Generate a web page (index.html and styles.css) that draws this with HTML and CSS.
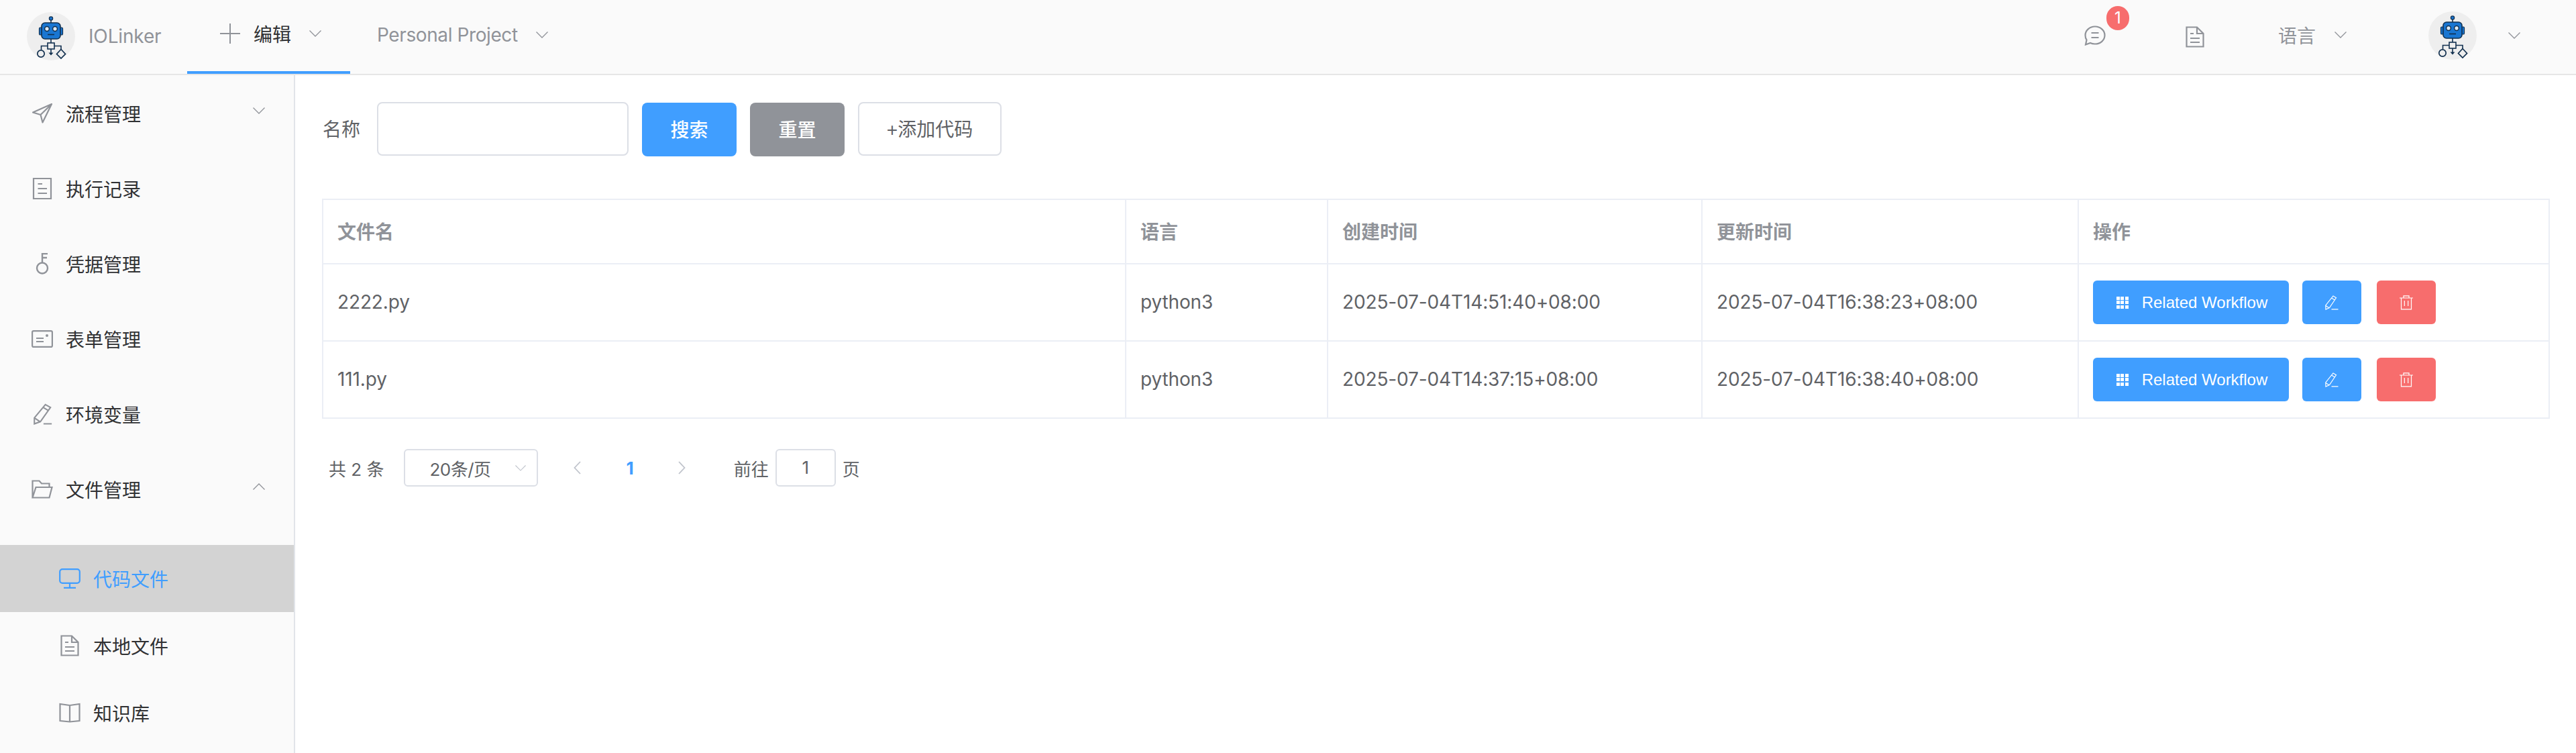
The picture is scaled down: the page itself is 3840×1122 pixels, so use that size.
FILE: index.html
```html
<!DOCTYPE html>
<html lang="zh">
<head>
<meta charset="utf-8">
<title>IOLinker</title>
<link rel="stylesheet" href="styles.css">
</head>
<body>
<svg class="defs" width="0" height="0" aria-hidden="true">
  <defs>
    <symbol id="robot" viewBox="0 0 72 72">
      <circle cx="36" cy="9.5" r="2.6" fill="#1976d2" stroke="#12304f" stroke-width="1.3"/>
      <path d="M36 12v4" stroke="#12304f" stroke-width="1.6" fill="none"/>
      <rect x="18.5" y="23" width="4" height="11" rx="1.6" fill="#1976d2" stroke="#12304f" stroke-width="1.2"/>
      <rect x="49.5" y="23" width="4" height="11" rx="1.6" fill="#1976d2" stroke="#12304f" stroke-width="1.2"/>
      <rect x="22" y="16" width="28" height="24" rx="5" fill="#1976d2" stroke="#12304f" stroke-width="1.6"/>
      <circle cx="30" cy="25" r="3.4" fill="#dbe9f5" stroke="#12304f" stroke-width="1.5"/>
      <circle cx="42" cy="25" r="3.4" fill="#dbe9f5" stroke="#12304f" stroke-width="1.5"/>
      <path d="M31 33.500h10" stroke="#12304f" stroke-width="1.6"/>
      <path d="M36 40v6M31 50.500H21.500V56M41 50.500H51V55M36 54.500V63" stroke="#12304f" stroke-width="1.6" fill="none"/>
      <rect x="31" y="46" width="10" height="9" fill="#eee" stroke="#12304f" stroke-width="1.6"/>
      <path d="M32.500 60.500L36 64.500L39.500 60.500Z" fill="#12304f"/>
      <circle cx="21" cy="62" r="5.200" fill="none" stroke="#12304f" stroke-width="1.7"/>
      <path d="M51 55.500L57.500 62.500L51 69L44.500 62.500Z" fill="none" stroke="#12304f" stroke-width="1.7"/>
    </symbol>
    <symbol id="chev" viewBox="0 0 18 10"><path d="M.5.500L9 9L17.500.500" fill="none" stroke="currentColor" stroke-width="1.300"/></symbol>
    <symbol id="doc" viewBox="0 0 28 32"><path d="M1.500 1.500H17L26.500 11V30.500H1.500ZM17 1.500V11H26.500M7 11H12M7 18H21M7 24H21" fill="none" stroke="currentColor" stroke-width="2.200"/></symbol>
    <symbol id="pencil" viewBox="0 0 20 22"><path d="M12 1L16.500 3.800L6.500 18.500L1 21L.8 15ZM9.800 4.200L14.500 7M1 15.500L5.500 18.500M9.500 20.800H19.500" fill="none" stroke="#fff" stroke-width="1.200"/></symbol>
    <symbol id="trash" viewBox="0 0 20 22"><path d="M0 4H20M6 4V.8H14V4M2.500 4V20.800H17.500V4M7.300 8V16M12.700 8V16" fill="none" stroke="#fff" stroke-width="1.200"/></symbol>
  </defs>
</svg>

<header class="topbar">
  <div class="brand">
    <span class="avatar"><svg class="robot"><use href="#robot"/></svg></span>
    <span class="brand-name">IOLinker</span>
  </div>
  <nav class="tabs">
    <div class="tab tab-active">
      <svg class="plus" viewBox="0 0 30 30"><path d="M15 0V30M0 15H30" stroke="#909399" stroke-width="2" fill="none"/></svg>
      <span class="tab-strong">编辑</span>
      <svg class="chev"><use href="#chev"/></svg>
    </div>
    <div class="tab tab-project">
      <span class="project-name">Personal Project</span>
      <svg class="chev"><use href="#chev"/></svg>
    </div>
  </nav>
  <div class="top-right">
    <div class="chat">
      <svg class="chat-icon" viewBox="0 0 32 30"><path d="M16 1.500C24 1.500 30.500 7.500 30.500 14.500C30.500 22 24 27.500 16 27.500C13.500 27.500 11 27 9 26L2 28.500L3.500 21.500C2 19.500 1.500 17 1.500 14.500C1.500 7.500 8 1.500 16 1.500ZM10.500 11H21.500M10.500 18H21.500" fill="none" stroke="#909399" stroke-width="2.200"/></svg>
      <span class="badge">1</span>
    </div>
    <svg class="top-doc"><use href="#doc"/></svg>
    <div class="lang"><span>语言</span><svg class="chev"><use href="#chev"/></svg></div>
    <span class="avatar avatar-user"><svg class="robot"><use href="#robot"/></svg></span>
    <svg class="chev chev-user"><use href="#chev"/></svg>
  </div>
</header>

<div class="body-row">
  <aside class="sidebar">
    <div class="menu-item">
      <svg class="menu-icon" viewBox="0 0 30 30"><path d="M29 1L1 13.500L12.500 17L15.500 28.500ZM29 1L12.500 17" fill="none" stroke="#909399" stroke-width="2.200" stroke-linejoin="round"/></svg>
      <span class="menu-label">流程管理</span>
      <svg class="chev menu-chev"><use href="#chev"/></svg>
    </div>
    <div class="menu-item">
      <svg class="menu-icon" viewBox="0 0 30 32"><path d="M2 1H28V31H2ZM8.500 9H15M8.500 16H22M8.500 23H22" fill="none" stroke="#909399" stroke-width="2.200"/></svg>
      <span class="menu-label">执行记录</span>
    </div>
    <div class="menu-item">
      <svg class="menu-icon" viewBox="0 0 30 32"><circle cx="15" cy="22.500" r="8" fill="none" stroke="#909399" stroke-width="2.400"/><path d="M15 14.500V1H23M15 7H22" fill="none" stroke="#909399" stroke-width="2.400"/></svg>
      <span class="menu-label">凭据管理</span>
    </div>
    <div class="menu-item">
      <svg class="menu-icon menu-icon-wide" viewBox="0 0 32 26"><rect x="1.100" y="1.100" width="29.800" height="23.800" rx="2" fill="none" stroke="#909399" stroke-width="2.200"/><path d="M7 12H18M7 17H18" stroke="#909399" stroke-width="2"/><circle cx="23" cy="8" r="2" fill="#909399"/></svg>
      <span class="menu-label">表单管理</span>
    </div>
    <div class="menu-item">
      <svg class="menu-icon" viewBox="0 0 30 34"><path d="M20 2L28 6.500L12 29L2.500 32.500L2.500 23ZM16.500 6.500L25 11.500M2.500 23L11.500 29M17 32.500H30" fill="none" stroke="#909399" stroke-width="2.200"/></svg>
      <span class="menu-label">环境变量</span>
    </div>
    <div class="menu-item">
      <svg class="menu-icon menu-icon-wide" viewBox="0 0 32 28"><path d="M1.500 26.500V1.500H11.500L15 5.500H26.500V11M1.500 26.500L6.500 11H30.500L26.500 26.500Z" fill="none" stroke="#909399" stroke-width="2.200"/></svg>
      <span class="menu-label">文件管理</span>
      <svg class="chev menu-chev chev-up"><use href="#chev"/></svg>
    </div>
    <div class="submenu">
      <div class="sub-item sub-active">
        <svg class="menu-icon menu-icon-wide" viewBox="0 0 32 30"><path d="M5 1.200H27A3.800 3.800 0 0 1 30.800 5V18A3.800 3.800 0 0 1 27 21.800H5A3.800 3.800 0 0 1 1.200 18V5A3.800 3.800 0 0 1 5 1.200ZM16 22V28M7 28.800H25" fill="none" stroke="#409eff" stroke-width="2.200"/></svg>
        <span>代码文件</span>
      </div>
      <div class="sub-item">
        <svg class="menu-icon sub-doc"><use href="#doc"/></svg>
        <span>本地文件</span>
      </div>
      <div class="sub-item">
        <svg class="menu-icon menu-icon-wide" viewBox="0 0 32 30"><path d="M16 4L1.500 2V27L16 28.500L30.500 27V2ZM16 4V28.500" fill="none" stroke="#909399" stroke-width="2.200"/></svg>
        <span>知识库</span>
      </div>
    </div>
  </aside>

  <main class="content">
    <form class="search">
      <label class="search-label">名称</label>
      <input class="search-input" type="text">
      <button class="btn btn-primary" type="button">搜索</button>
      <button class="btn btn-grey" type="button">重置</button>
      <button class="btn btn-plain" type="button">+添加代码</button>
    </form>

    <table class="grid">
      <colgroup>
        <col class="c-name"><col class="c-lang"><col class="c-time"><col class="c-time2"><col class="c-ops">
      </colgroup>
      <thead>
        <tr><th>文件名</th><th>语言</th><th>创建时间</th><th>更新时间</th><th>操作</th></tr>
      </thead>
      <tbody>
        <tr>
          <td>2222.py</td><td>python3</td><td>2025-07-04T14:51:40+08:00</td><td>2025-07-04T16:38:23+08:00</td>
          <td>
            <div class="ops">
              <button class="op op-wf" type="button"><span class="dots"><i></i><i></i><i></i><i></i><i></i><i></i><i></i><i></i><i></i></span>Related Workflow</button>
              <button class="op op-edit" type="button"><svg class="op-icon"><use href="#pencil"/></svg></button>
              <button class="op op-del" type="button"><svg class="op-icon"><use href="#trash"/></svg></button>
            </div>
          </td>
        </tr>
        <tr>
          <td>111.py</td><td>python3</td><td>2025-07-04T14:37:15+08:00</td><td>2025-07-04T16:38:40+08:00</td>
          <td>
            <div class="ops">
              <button class="op op-wf" type="button"><span class="dots"><i></i><i></i><i></i><i></i><i></i><i></i><i></i><i></i><i></i></span>Related Workflow</button>
              <button class="op op-edit" type="button"><svg class="op-icon"><use href="#pencil"/></svg></button>
              <button class="op op-del" type="button"><svg class="op-icon"><use href="#trash"/></svg></button>
            </div>
          </td>
        </tr>
      </tbody>
    </table>

    <div class="pager">
      <span class="total">共 2 条</span>
      <div class="size"><span class="size-text">20条/页</span><svg class="chev size-chev"><use href="#chev"/></svg></div>
      <svg class="arrow" viewBox="0 0 11 20"><path d="M10 1L1.500 10L10 19" fill="none" stroke="#c0c4cc" stroke-width="1.800"/></svg>
      <span class="page-num">1</span>
      <svg class="arrow" viewBox="0 0 11 20"><path d="M1 1L9.500 10L1 19" fill="none" stroke="#c0c4cc" stroke-width="1.800"/></svg>
      <span class="goto">前往</span>
      <div class="jump">1</div>
      <span class="goto-end">页</span>
    </div>
  </main>
</div>
</body>
</html>
```
FILE: styles.css
```css
* { box-sizing: border-box; }
html, body { margin: 0; height: 100%; overflow: hidden; }
body {
  background: #fff;
  color: #606266;
  font-family: "Inter", "Noto Sans CJK SC", sans-serif;
  font-size: 28px;
}
.defs { position: absolute; }

.topbar {
  display: flex;
  align-items: stretch;
  height: 112px;
  background: #fafafa;
  border-bottom: 2px solid #e6e6e6;
}
.brand { display: flex; align-items: center; width: 279px; padding: 0 0 2px 40px; color: #909399; font-size: 28px; }
.avatar { display: block; flex: none; width: 72px; height: 72px; border-radius: 50%; background: #eee; }
.robot { display: block; width: 72px; height: 72px; }
.brand-name { margin-left: 20px; letter-spacing: -0.15px; }
.tabs { display: flex; }
.tab { display: flex; align-items: center; height: 110px; padding-bottom: 6px; color: #909399; }
.tab-active { width: 243px; padding-left: 49px; border-bottom: 4px solid #409eff; }
.plus { width: 30px; height: 30px; margin-right: 20px; }
.tab-strong { color: #303133; }
.chev { flex: none; display: block; width: 18px; height: 10px; color: #909399; }
.tab .chev { margin-left: 27px; }
.tab-project { padding-left: 40px; }
.project-name { letter-spacing: -0.4px; }
.top-right { display: flex; align-items: center; margin-left: auto; padding: 0 83px 4px 0; color: #909399; }
.chat { position: relative; width: 32px; height: 30px; }
.chat-icon { display: block; width: 32px; height: 30px; }
.badge {
  position: absolute; left: 33px; top: -29px;
  width: 34px; height: 36px; border-radius: 18px;
  background: #f76d6d; color: #fff;
  font-size: 24px; line-height: 36px; text-align: center;
}
.top-doc { width: 28px; height: 32px; margin: 3px 0 0 119px; color: #909399; }
.lang { display: flex; align-items: center; margin: 0 0 2px 110px; }
.lang .chev { margin-left: 28px; }
.avatar-user { margin-left: 122px; }
.chev-user { margin-left: 47px; }

.body-row { display: flex; height: 1010px; }
.sidebar {
  flex: none; width: 440px;
  background: #fafafa;
  border-right: 2px solid #e1e4e9;
  padding-top: 1px;
}
.menu-item { display: flex; align-items: center; height: 112px; padding: 0 43px 0 48px; color: #303133; }
.menu-icon { flex: none; display: block; width: 30px; height: 32px; margin-right: 20px; color: #909399; }
.menu-icon-wide { width: 32px; margin-left: -1px; margin-right: 19px; }
.menu-label { flex: 1; }
.chev-up { transform: rotate(180deg); }
.menu-chev { margin-bottom: 8px; }
.submenu { padding-top: 27px; }
.sub-item { display: flex; align-items: center; height: 100px; padding-left: 89px; color: #303133; }
.sub-active { background: #d3d3d3; color: #409eff; }
.sub-doc { width: 28px; margin-left: 1px; margin-right: 21px; }

.content { flex: 1; padding: 40px 40px 0 41px; min-width: 0; }
.search { display: flex; align-items: center; height: 80px; }
.search-label { font-size: 28px; margin: 0 25px 2px 0; }
.search-input { width: 375px; height: 80px; border: 2px solid #dcdfe6; border-radius: 8px; background: #fff; outline: none; }
.btn { height: 80px; border-radius: 8px; font: inherit; font-size: 28px; padding: 0 0 2px; margin-left: 20px; border: 0; }
.btn-primary, .btn-grey { margin-top: 2px; width: 141px; color: #fff; font-weight: 500; }
.btn-primary { background: #409eff; }
.btn-grey { background: #909399; }
.btn-plain { width: 214px; background: #fff; color: #606266; border: 2px solid #dcdfe6; font-family: "Liberation Sans", "Noto Sans CJK SC", sans-serif; }

.grid { table-layout: fixed; width: 3319px; margin: 64px 0 0 -1px; border-collapse: collapse; border: 2px solid #ebeef5; }
.c-name { width: 1197px; }
.c-lang { width: 301px; }
.c-time { width: 558px; }
.c-time2 { width: 561px; }
.c-ops { width: 702px; }
.grid th, .grid td { border: 2px solid #ebeef5; padding: 0 0 0 21px; text-align: left; }
.grid th { height: 96px; padding-bottom: 2px; font-weight: 700; color: #909399; font-size: 28px; }
.grid td { height: 115px; padding-bottom: 1px; color: #606266; letter-spacing: -0.13px; }
.grid td:last-child { padding-bottom: 0; }
.ops { display: flex; align-items: center; }
.op { display: flex; align-items: center; justify-content: center; height: 65px; border: 0; border-radius: 6px; padding: 0; color: #fff; font-family: "Liberation Sans", sans-serif; font-size: 24px; }
.op-wf { width: 292px; padding-left: 3px; background: #409eff; }
.op-edit { width: 88px; margin-left: 20px; background: #409eff; }
.op-del { width: 88px; margin-left: 23px; background: #f76d6d; }
.op-icon { width: 20px; height: 22px; }
.dots { display: grid; grid-template-columns: repeat(3, 5px); grid-auto-rows: 5px; gap: 1.5px; margin-right: 20px; }
.dots i { display: block; background: #fff; }

.pager { display: flex; align-items: center; height: 56px; margin-top: 45px; padding-left: 9px; font-size: 26px; }
.total { margin-right: 30px; }
.size { display: flex; align-items: center; width: 200px; height: 56px; padding-left: 36px; border: 2px solid #dcdfe6; border-radius: 6px; margin-right: 53px; }
.size-text { letter-spacing: -0.5px; }
.size-chev { width: 16px; height: 9px; margin-left: auto; margin-right: 16px; color: #c0c4cc; }
.arrow { width: 11px; height: 20px; flex: none; }
.page-num { margin: 0 66px 0 67px; color: #409eff; font-weight: 700; }
.goto { margin-left: 72px; margin-right: 10px; }
.jump { width: 90px; height: 56px; border: 2px solid #dcdfe6; border-radius: 6px; text-align: center; line-height: 52px; }
.goto-end { margin-left: 10px; }
```
